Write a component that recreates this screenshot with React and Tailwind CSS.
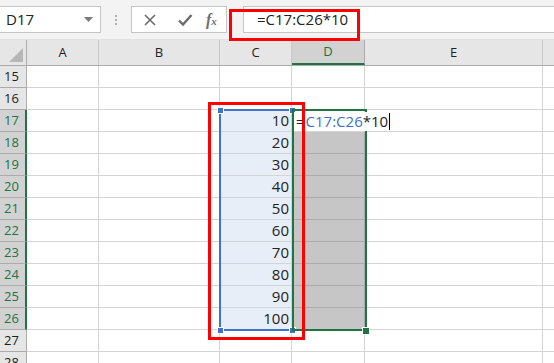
import React from "react";

const cols = [
    { name: "A", w: "w-[72px]" },
    { name: "B", w: "w-[121px]" },
    { name: "C", w: "w-[72px]" },
    { name: "D", w: "w-[73px]" },
    { name: "E", w: "w-[178px]" },
];

const rows = [15, 16, 17, 18, 19, 20, 21, 22, 23, 24, 25, 26, 27, 28];
const values = { 17: 10, 18: 20, 19: 30, 20: 40, 21: 50, 22: 60, 23: 70, 24: 80, 25: 90, 26: 100 };

const font = { fontFamily: "'Open Sans', 'Noto Sans', 'Liberation Sans', sans-serif" };

const Toolbar = () => (
    <div className="flex items-center h-[40px] bg-[#f3f3f3] border-b border-[#e1e1e1]">
        {/* name box */}
        <div className="flex items-center justify-between w-[101px] h-[27px] bg-white border border-[#c6c6c6] border-l-0 pl-[6px] pr-[7px]">
            <span className="text-[15px] text-[#222]">D17</span>
            <svg width="9" height="5" viewBox="0 0 9 5"><path d="M0 0h9L4.5 5z" fill="#7a7a7a" /></svg>
        </div>
        {/* grip */}
        <div className="flex flex-col gap-[2px] ml-[14px] mr-[14px]">
            <div className="w-[2px] h-[2px] bg-[#b0b0b0]" />
            <div className="w-[2px] h-[2px] bg-[#b0b0b0]" />
            <div className="w-[2px] h-[2px] bg-[#b0b0b0]" />
        </div>
        {/* buttons */}
        <div className="flex items-center h-[27px] w-[96px] bg-white border border-[#c6c6c6] pl-[11px]">
            <svg width="14" height="14" viewBox="0 0 14 14">
                <path d="M2 2l10 10M12 2L2 12" stroke="#6b6b6b" strokeWidth="1.6" />
            </svg>
            <svg width="16" height="14" viewBox="0 0 16 14" className="ml-[20px]">
                <path d="M2 7.5l4 4L14.5 2" stroke="#6b6b6b" strokeWidth="2.4" fill="none" />
            </svg>
            <span
                className="ml-[13px] text-[16px] font-bold italic text-[#707070] leading-none"
                style={{ fontFamily: "'Liberation Serif', serif" }}
            >
                f<span className="text-[11px]">x</span>
            </span>
        </div>
        {/* formula input */}
        <div className="flex items-center flex-1 h-[27px] ml-[16px] bg-white border border-[#c6c6c6] border-r-0 pl-[13px]">
            <span className="text-[15px] text-[#222]">=C17:C26*10</span>
        </div>
    </div>
);

const Header = () => (
    <div className="flex h-[26px] bg-[#e6e6e6] border-b border-[#ababab]">
        <div className="relative w-[27px] h-full border-r border-[#ababab]">
            <svg width="14" height="14" viewBox="0 0 14 14" className="absolute right-[3px] bottom-[3px]">
                <path d="M14 0v14H0z" fill="#b7b7b7" />
            </svg>
        </div>
        {cols.map((c) => (
            <div
                key={c.name}
                className={`${c.w} h-full flex items-center justify-center text-[13px] border-r ${
                    c.name === "D"
                        ? "bg-[#d2d2d2] text-[#217346] border-[#ababab] border-b-2 border-b-[#217346]"
                        : "text-[#222] border-[#c9c9c9]"
                }`}
            >
                {c.name}
            </div>
        ))}
        <div className="flex-1" />
    </div>
);

const Row = ({ n }) => {
    const sel = n >= 17 && n <= 26;
    return (
        <div className="flex h-[22px]">
            <div
                className={`w-[27px] h-full flex items-center pl-[4px] text-[13px] border-b ${
                    sel
                        ? "bg-[#d2d2d2] text-[#217346] border-[#ababab] border-r-2 border-r-[#217346]"
                        : "bg-[#e6e6e6] text-[#222] border-[#ababab] border-r border-r-[#ababab]"
                }`}
            >
                {n}
            </div>
            {cols.map((c) => {
                let bg = "bg-white";
                if (sel && c.name === "C") bg = "bg-[#e8eef8]";
                if (sel && c.name === "D" && n !== 17) bg = "bg-[#c6c6c6]";
                const line = sel && c.name === "D" && n !== 17 ? "border-[#ababab]" : "border-[#d4d4d4]";
                return (
                    <div
                        key={c.name}
                        className={`${c.w} h-full flex items-center justify-end pr-[2px] text-[15px] text-[#222] border-r border-b ${bg} ${line}`}
                    >
                        {c.name === "C" && values[n]}
                    </div>
                );
            })}
            <div className="flex-1 h-full border-b border-[#d4d4d4]" />
        </div>
    );
};

export default function App() {
    return (
        <div className="relative w-[554px] h-[363px] overflow-hidden bg-white select-none" style={font}>
            <Toolbar />
            <Header />
            {rows.map((n) => (
                <Row key={n} n={n} />
            ))}

            {/* blue reference range C17:C26 */}
            <div className="absolute left-[219px] top-[109px] w-[75px] h-[222px] border-2 border-[#3f72c8]" />
            {[
                "left-[218px] top-[108px]",
                "left-[290px] top-[108px]",
                "left-[218px] top-[328px]",
                "left-[290px] top-[328px]",
            ].map((p) => (
                <div key={p} className={`absolute ${p} w-[5px] h-[5px] bg-[#3f72c8] border border-white box-content -m-[1px]`} />
            ))}

            {/* green selection D17:D26 */}
            <div className="absolute left-[292px] top-[109px] w-[75px] h-[222px] border-2 border-[#217346]" />
            <div className="absolute left-[362px] top-[327px] w-[6px] h-[6px] bg-[#217346] border border-white box-content" />

            {/* in-cell formula */}
            <div className="absolute left-[294px] top-[112px] h-[19px] flex items-center bg-white pl-[2px] pr-[1px] text-[15px] text-[#222]">
                =<span className="text-[#3f72c8] ml-[1px]">C17:C26</span>*10
                <span className="inline-block w-[1px] h-[17px] bg-black ml-[1px]" />
            </div>

            {/* red callouts */}
            <div className="absolute left-[229px] top-[9px] w-[131px] h-[32px] border-[3px] border-[#ff0000]" />
            <div className="absolute left-[208px] top-[102px] w-[97px] h-[238px] border-[3px] border-[#ff0000]" />
        </div>
    );
}
